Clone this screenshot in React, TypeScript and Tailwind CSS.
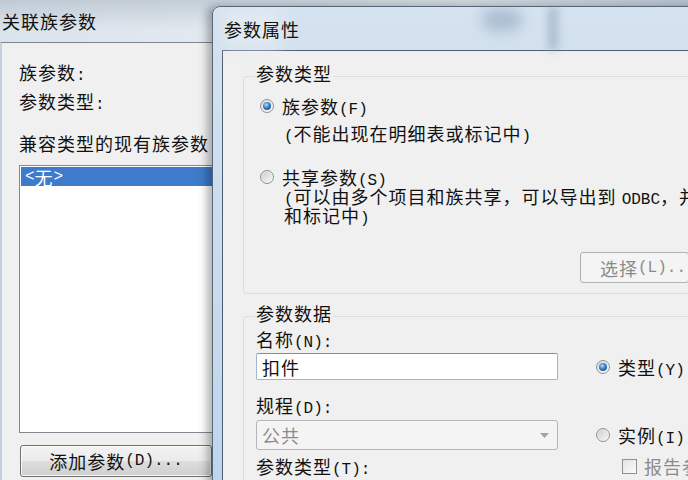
import React from "react";

// half-width latin bits (SimSun-like monospace look)
function A({ children }: { children: React.ReactNode }) {
  return <span className="font-['Liberation_Mono',monospace] text-[16px] leading-[0] tracking-normal">{children}</span>;
}

function Radio({ checked }: { checked?: boolean }) {
  return (
    <span className="flex h-[14px] w-[14px] shrink-0 items-center justify-center rounded-full border border-[#8e9194] bg-[linear-gradient(135deg,#d8dadc,#fbfbfb)]">
      {checked ? (
        <span className="h-[8px] w-[8px] rounded-full bg-[radial-gradient(circle_at_40%_35%,#b8dcff,#3a7cc4_45%,#173f74)]" />
      ) : (
        <span className="h-[10px] w-[10px] rounded-full bg-[linear-gradient(135deg,#cdcfd1,#f6f6f6)]" />
      )}
    </span>
  );
}

function GroupBox({ title, className, children }: { title: string; className?: string; children: React.ReactNode }) {
  return (
    <div className={`relative shrink-0 rounded-[3px] border border-[#d5dfe5] ${className ?? ""}`}>
      <span className="absolute -top-[14px] left-[11px] bg-[#f0f0f0] px-[1px]">{title}</span>
      {children}
    </div>
  );
}

export default function App() {
  return (
    <div className="relative h-[480px] w-[688px] overflow-hidden bg-[#b9c3cd] font-['Noto_Sans_CJK_SC',sans-serif] text-[18px] leading-[20px] tracking-[1px] text-[#111]">
      {/* back window: 关联族参数 */}
      <div className="absolute left-0 top-0 flex h-[500px] w-[688px] flex-col">
        <div className="flex h-[42px] shrink-0 items-center bg-[linear-gradient(180deg,rgba(110,128,148,0.25),rgba(255,255,255,0)_70%),linear-gradient(90deg,#dbe3eb,#e5ebf1_45%,#f2f5f8_68%,#cfd9e3)] pl-[2px]">
          关联族参数
        </div>
        <div className="flex flex-1 flex-col border-l-[2px] border-t border-l-[#c6d0da] border-t-[#7b8591] bg-[#f0f0f0] pl-[17px] pt-[19px]">
          <div className="h-[20px] shrink-0">族参数<A>:</A></div>
          <div className="mt-[9px] h-[20px] shrink-0">参数类型<A>:</A></div>
          <div className="mt-[22px] h-[20px] shrink-0">兼容类型的现有族参数</div>
          <div className="mt-[12px] h-[268px] w-[210px] shrink-0 border border-[#828790] bg-white p-[1px]">
            <div className="flex h-[19px] items-center bg-[#3f7bcb] pl-[4px] text-white">
              <A>&lt;</A>无<A>&gt;</A>
            </div>
          </div>
          <div className="ml-[1px] mt-[12px] flex h-[32px] w-[192px] shrink-0 items-center justify-center rounded-[3px] border border-[#707070] bg-[linear-gradient(180deg,#f3f3f3,#ebebeb_50%,#dddddd_51%,#cfcfcf)] shadow-[inset_0_0_0_1px_rgba(255,255,255,0.8)]">
            添加参数<A>(D)...</A>
          </div>
        </div>
      </div>

      {/* front dialog: 参数属性 */}
      <div className="absolute left-[212px] top-[6px] flex h-[490px] w-[500px] flex-col overflow-hidden rounded-tl-[8px] border border-[#56677a] bg-[linear-gradient(180deg,#d5e2ef,#bfd5ec)] pl-[9px] shadow-[-5px_0_9px_rgba(0,0,0,0.3)]">
        <div className="relative flex h-[43px] shrink-0 items-center pl-[2px]">
          <span className="pointer-events-none absolute left-[260px] top-[2px] h-[22px] w-[40px] rounded-full bg-[#8fa5bd] opacity-60 blur-[7px]" />
          <span className="pointer-events-none absolute left-[326px] top-0 h-[43px] w-[10px] bg-[#8fa3b9] opacity-60 blur-[4px]" />
          <span className="pointer-events-none absolute left-0 top-0 h-[43px] w-[60px] bg-[#e6ecf2] opacity-70 blur-[8px]" />
          <span className="relative">参数属性</span>
        </div>
        <div className="flex flex-1 flex-col border-l border-t border-[#4f5e70] bg-[#f0f0f0] pt-[25px]">
          <GroupBox title="参数类型" className="ml-[20px] mr-[11px] pb-[10px] pt-[19px]">
            <div className="flex flex-col">
              <div className="flex h-[20px] items-center gap-[8px] pl-[16px]">
                <Radio checked />
                <span>族参数<A>(F)</A></span>
              </div>
              <div className="mt-[7px] h-[20px] pl-[40px]">
                <A>(</A>不能出现在明细表或标记中<A>)</A>
              </div>
              <div className="mt-[24px] flex h-[20px] items-center gap-[8px] pl-[16px]">
                <Radio />
                <span>共享参数<A>(S)</A></span>
              </div>
              <div className="h-[19px] whitespace-nowrap pl-[40px] leading-[19px]">
                <A>(</A>可以由多个项目和族共享，可以导出到 <A>ODBC</A>，并且可以出现在明细表
              </div>
              <div className="h-[19px] pl-[40px] leading-[19px]">
                和标记中<A>)</A>
              </div>
              <div className="mt-[27px] flex justify-end pr-[10px]">
                <div className="flex h-[31px] w-[109px] items-center whitespace-nowrap rounded-[3px] border border-[#adb2b5] bg-[#f4f4f4] pl-[19px] text-[#8b8b8b]">
                  选择<A>(L)..</A>
                </div>
              </div>
            </div>
          </GroupBox>

          <GroupBox title="参数数据" className="ml-[20px] mr-[11px] mt-[22px] pb-[20px] pt-[12px]">
            <div className="flex flex-col pl-[12px]">
              <div className="h-[20px]">名称<A>(N):</A></div>
              <div className="mt-[4px] flex items-center gap-[38px]">
                <div className="flex h-[27px] w-[302px] shrink-0 items-center rounded-[2px] border border-[#a4b5c8] border-t-[#7f91a6] bg-white pl-[5px]">
                  扣件
                </div>
                <div className="flex shrink-0 items-center gap-[8px] whitespace-nowrap">
                  <Radio checked />
                  <span>类型<A>(Y)</A></span>
                </div>
              </div>
              <div className="mt-[15px] h-[20px]">规程<A>(D):</A></div>
              <div className="mt-[5px] flex items-center gap-[38px]">
                <div className="flex h-[30px] w-[302px] shrink-0 items-center justify-between rounded-[3px] border border-[#b3b7bb] bg-[#f4f4f4] pl-[5px] pr-[8px] text-[#8c8c8c]">
                  <span>公共</span>
                  <svg width="9" height="5" viewBox="0 0 9 5">
                    <path d="M0 0 L9 0 L4.5 5 Z" fill="#a3a3a3" />
                  </svg>
                </div>
                <div className="flex shrink-0 items-center gap-[8px] whitespace-nowrap">
                  <Radio />
                  <span>实例<A>(I)</A></span>
                </div>
              </div>
              <div className="mt-[6px] flex h-[20px] items-center gap-[38px]">
                <div className="w-[302px] shrink-0">参数类型<A>(T):</A></div>
                <div className="flex shrink-0 items-center gap-[7px] whitespace-nowrap pl-[26px]">
                  <span className="h-[15px] w-[15px] shrink-0 border border-[#8e9194] bg-[linear-gradient(135deg,#e2e3e4,#fbfbfb)]" />
                  <span className="text-[#8c8c8c]">报告参数</span>
                </div>
              </div>
            </div>
          </GroupBox>
        </div>
      </div>
    </div>
  );
}
